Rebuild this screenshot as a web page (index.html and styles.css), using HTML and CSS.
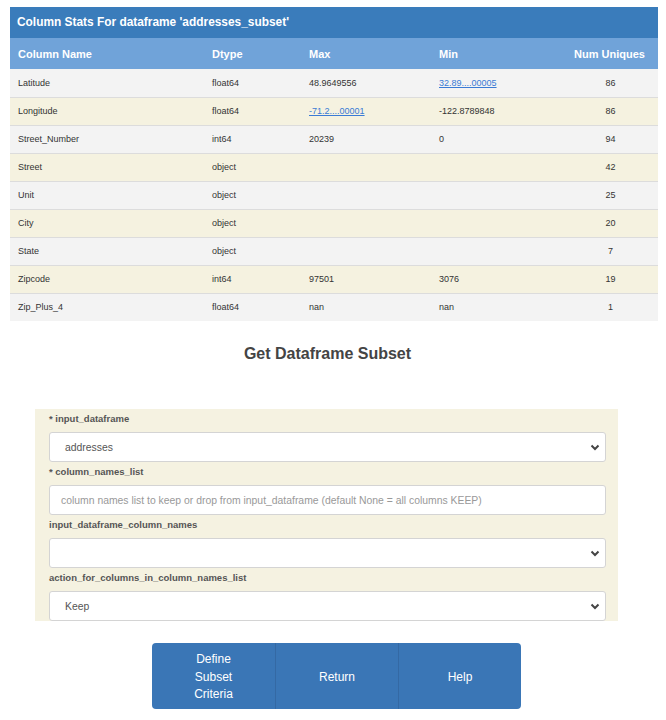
FILE: index.html
```html
<!DOCTYPE html>
<html>
<head>
<meta charset="utf-8">
<link rel="stylesheet" href="styles.css">
</head>
<body>
<div class="page">
  <div class="stats">
    <div class="stats-title">Column Stats For dataframe 'addresses_subset'</div>
    <table class="stats-table">
      <colgroup>
        <col class="c1"><col class="c2"><col class="c3"><col class="c4"><col class="c5">
      </colgroup>
      <thead>
        <tr><th>Column Name</th><th>Dtype</th><th>Max</th><th>Min</th><th class="num">Num Uniques</th></tr>
      </thead>
      <tbody>
        <tr><td>Latitude</td><td>float64</td><td>48.9649556</td><td><a href="#">32.89....00005</a></td><td class="num">86</td></tr>
        <tr><td>Longitude</td><td>float64</td><td><a href="#">-71.2....00001</a></td><td>-122.8789848</td><td class="num">86</td></tr>
        <tr><td>Street_Number</td><td>int64</td><td>20239</td><td>0</td><td class="num">94</td></tr>
        <tr><td>Street</td><td>object</td><td></td><td></td><td class="num">42</td></tr>
        <tr><td>Unit</td><td>object</td><td></td><td></td><td class="num">25</td></tr>
        <tr><td>City</td><td>object</td><td></td><td></td><td class="num">20</td></tr>
        <tr><td>State</td><td>object</td><td></td><td></td><td class="num">7</td></tr>
        <tr><td>Zipcode</td><td>int64</td><td>97501</td><td>3076</td><td class="num">19</td></tr>
        <tr><td>Zip_Plus_4</td><td>float64</td><td>nan</td><td>nan</td><td class="num">1</td></tr>
      </tbody>
    </table>
  </div>

  <h2 class="form-title">Get Dataframe Subset</h2>

  <div class="form-panel">
    <label class="field-label">* input_dataframe</label>
    <div class="select">
      <span class="select-value">addresses</span>
      <svg class="chev" width="10" height="7" viewBox="0 0 10 7"><path d="M1.5 1.5 L5 5 L8.5 1.5" fill="none" stroke="#444" stroke-width="2"/></svg>
    </div>
    <label class="field-label">* column_names_list</label>
    <div class="input"><span class="placeholder">column names list to keep or drop from input_dataframe (default None = all columns KEEP)</span></div>
    <label class="field-label">input_dataframe_column_names</label>
    <div class="select">
      <span class="select-value"></span>
      <svg class="chev" width="10" height="7" viewBox="0 0 10 7"><path d="M1.5 1.5 L5 5 L8.5 1.5" fill="none" stroke="#444" stroke-width="2"/></svg>
    </div>
    <label class="field-label">action_for_columns_in_column_names_list</label>
    <div class="select">
      <span class="select-value">Keep</span>
      <svg class="chev" width="10" height="7" viewBox="0 0 10 7"><path d="M1.5 1.5 L5 5 L8.5 1.5" fill="none" stroke="#444" stroke-width="2"/></svg>
    </div>
  </div>

  <div class="btn-group">
    <button class="btn">Define Subset Criteria</button>
    <button class="btn">Return</button>
    <button class="btn">Help</button>
  </div>
</div>
</body>
</html>
```

FILE: styles.css
```css
* { box-sizing: border-box; }
html, body { margin: 0; padding: 0; background: #fff; }
body { font-family: "Liberation Sans", Arial, sans-serif; color: #333; }

.page { padding: 7px 8px 0 10px; }

.stats { width: 648px; }
.stats-title {
  background: #3a7cbb;
  color: #fff;
  font-weight: bold;
  font-size: 11.9px;
  height: 31px;
  line-height: 31px;
  padding-left: 7px;
}
.stats-table {
  width: 648px;
  border-collapse: collapse;
  table-layout: fixed;
  font-size: 9px;
}
.c1 { width: 194px; }
.c2 { width: 97px; }
.c3 { width: 130px; }
.c4 { width: 132px; }
.c5 { width: 95px; }
.stats-table th {
  background: #70a3d9;
  color: #fff;
  font-size: 11px;
  font-weight: bold;
  text-align: left;
  height: 31px;
  padding: 0 8px;
}
.stats-table th.num { text-align: right; padding: 0 13px 0 0; }
.stats-table td {
  height: 28px;
  padding: 0 8px;
  border-top: 1px solid #dcdcdc;
  color: #333;
}
.stats-table tbody tr:first-child td { border-top: none; }
.stats-table tbody tr:nth-child(odd) td { background: #f3f3f3; }
.stats-table tbody tr:nth-child(even) td { background: #f5f2e0; }
.stats-table td.num { text-align: center; padding: 0; }
.stats-table a { color: #3a7bd5; text-decoration: underline; }

.form-title {
  margin: 0;
  padding-top: 24px;
  height: 88px;
  text-align: center;
  font-size: 16px;
  font-weight: bold;
  color: #444;
  width: 635px;
}

.form-panel {
  margin-left: 25px;
  width: 583px;
  background: #f5f2e1;
  padding: 0 12px 0 14px;
  display: flex;
  flex-direction: column;
}
.field-label {
  display: block;
  height: 20px;
  line-height: 20px;
  margin-bottom: 3px;
  font-size: 9.5px;
  font-weight: bold;
  color: #555;
}
.select, .input {
  height: 30px;
  background: #fff;
  border: 1px solid #d4d4d4;
  border-radius: 3px;
  display: flex;
  align-items: center;
  font-size: 10.4px;
  color: #555;
}
.select { justify-content: space-between; padding: 0 5px 0 15px; }
.input { padding: 0 11px; }
.placeholder { color: #999; white-space: nowrap; }
.chev { flex: none; }

.btn-group {
  margin: 22px 0 0 142px;
  display: flex;
  width: 370px;
}
.btn {
  width: 123px;
  flex: none;
  min-height: 66px;
  background: #3a76b6;
  color: #fff;
  border: none;
  border-left: 1px solid #3469a4;
  font-family: "Liberation Sans", Arial, sans-serif;
  font-size: 12px;
  line-height: 17.5px;
  padding: 8px 30px 5px;
}
.btn:first-child { border-left: none; border-radius: 4px 0 0 4px; }
.btn:last-child { border-radius: 0 4px 4px 0; }
```
